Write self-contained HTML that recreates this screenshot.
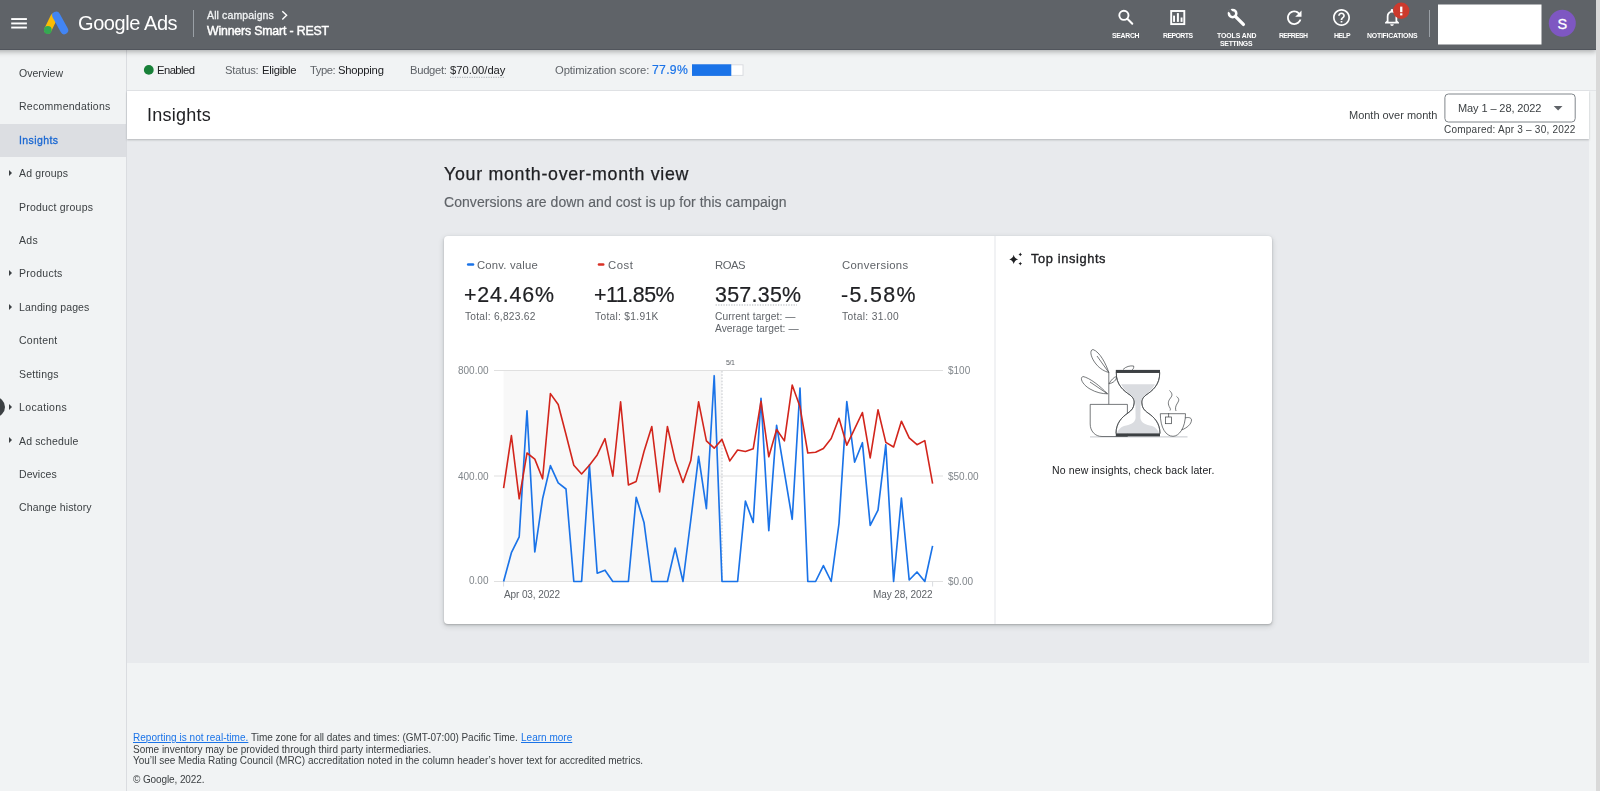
<!DOCTYPE html>
<html><head><meta charset="utf-8">
<style>
*{box-sizing:border-box;margin:0;padding:0}
html,body{width:1600px;height:791px;overflow:hidden;background:#f1f3f4;font-family:"Liberation Sans",sans-serif;color:#3c4043}
.abs{position:absolute}
.tx{position:absolute;white-space:nowrap;z-index:10;will-change:transform}
#hdr{position:absolute;left:-10px;top:0;width:1606px;height:50px;background:#5f6368;border-bottom:1px solid #51555c;box-shadow:0 2px 5px rgba(0,0,0,.28);z-index:5}
#side{position:absolute;left:0;top:49px;width:127px;height:742px;background:#f1f3f4;border-right:1px solid #dadce0}
.caret{position:absolute;left:9.2px;width:0;height:0;border-top:3.1px solid transparent;border-bottom:3.1px solid transparent;border-left:3.5px solid #3c4043}
#status{position:absolute;left:127px;top:49px;width:1469px;height:42px;background:#f1f3f4;border-bottom:1px solid #e3e5e8}
#titlebar{position:absolute;left:127px;top:91px;width:1462px;height:47.5px;background:#fff;box-shadow:0 1px 2px rgba(60,64,67,.3);z-index:2}
#main{position:absolute;left:127px;top:138px;width:1462px;height:525px;background:#e8eaed}
#sbar{position:absolute;left:1596px;top:0;width:4px;height:791px;background:#d9d9d9;z-index:20}
#card{position:absolute;left:444px;top:236px;width:828px;height:388px;background:#fff;border-radius:4px;box-shadow:0 1px 2px rgba(60,64,67,.3),0 2px 5px 1px rgba(60,64,67,.15)}
</style></head>
<body>
<div id="hdr"></div>
<div id="side"></div>
<div id="status"></div>
<div id="titlebar"></div>
<div id="main"></div>
<div id="card"></div>
<div id="sbar"></div>
<!-- selected nav -->
<div class="abs" style="left:0;top:123.8px;width:126px;height:33px;background:#dcdee2;z-index:1"></div>
<div class="caret" style="top:170px;z-index:2"></div>
<div class="caret" style="top:270.3px;z-index:2"></div>
<div class="caret" style="top:303.7px;z-index:2"></div>
<div class="caret" style="top:404px;z-index:2"></div>
<div class="caret" style="top:437.4px;z-index:2"></div>
<div class="abs" style="left:-15px;top:397px;width:20px;height:20px;border-radius:50%;background:#3c4043;z-index:3"></div>

<svg class="abs" style="left:0;top:0;z-index:8" width="1600" height="791" viewBox="0 0 1600 791">
  <!-- hamburger -->
  <rect x="11.2" y="18.1" width="15.7" height="1.9" fill="#fff"/>
  <rect x="11.2" y="22.5" width="15.7" height="1.9" fill="#fff"/>
  <rect x="11.2" y="26.6" width="15.7" height="1.9" fill="#fff"/>
  <!-- ads logo -->
  <line x1="54" y1="17.2" x2="47.8" y2="29.8" stroke="#fbbc04" stroke-width="7.4" stroke-linecap="round"/>
  <line x1="56.2" y1="15.6" x2="64.2" y2="30.2" stroke="#4285f4" stroke-width="8" stroke-linecap="round"/>
  <circle cx="47.8" cy="30" r="3.9" fill="#34a853"/>
  <!-- dividers -->
  <rect x="193" y="10" width="1" height="27" fill="#9aa0a6"/>
  <rect x="1429" y="10" width="1" height="27" fill="#9aa0a6"/>
  <!-- chevron -->
  <path d="M282.3 11.2 L286.6 15.3 L282.3 19.4" stroke="#fff" stroke-width="1.4" fill="none"/>
  <!-- search -->
  <circle cx="1123.9" cy="15.3" r="4.6" stroke="#fff" stroke-width="1.9" fill="none"/>
  <line x1="1127.3" y1="18.7" x2="1132.3" y2="23.8" stroke="#fff" stroke-width="2" stroke-linecap="round"/>
  <!-- reports -->
  <rect x="1171.2" y="11" width="13.1" height="13.1" stroke="#fff" stroke-width="1.9" fill="none"/>
  <rect x="1173.1" y="15.6" width="1.9" height="6.3" fill="#fff"/>
  <rect x="1176.9" y="13.1" width="2" height="8.8" fill="#fff"/>
  <rect x="1180.6" y="17.5" width="1.9" height="4.4" fill="#fff"/>
  <!-- tools -->
  <circle cx="1232.6" cy="13.6" r="3.7" stroke="#fff" stroke-width="2.5" fill="none"/>
  <line x1="1235.6" y1="16.6" x2="1243.4" y2="24.4" stroke="#fff" stroke-width="3.3" stroke-linecap="round"/>
  <path d="M1227.5 11.2 L1230.2 8.5 L1233.6 13.2 L1232.4 14.4 Z" fill="#5f6368"/>
  <!-- refresh -->
  <g transform="translate(1283.4,6.9) scale(0.906)">
    <path d="M17.65 6.35C16.2 4.9 14.21 4 12 4c-4.42 0-7.99 3.58-7.99 8s3.57 8 7.99 8c3.73 0 6.84-2.55 7.730-6h-2.08c-.82 2.33-3.04 4-5.65 4-3.310 0-6-2.69-6-6s2.69-6 6-6c1.66 0 3.14.69 4.22 1.78L13 11h7V4l-2.35 2.35z" fill="#fff"/>
  </g>
  <!-- help -->
  <g transform="translate(1331.3,7.3) scale(0.85)">
    <path d="M11 18h2v-2h-2v2zm1-16C6.48 2 2 6.48 2 12s4.48 10 10 10 10-4.480 10-10S17.52 2 12 2zm0 18c-4.41 0-8-3.59-8-8s3.59-8 8-8 8 3.59 8 8-3.59 8-8 8zm0-14c-2.21 0-4 1.79-4 4h2c0-1.1.9-2 2-2s2 .9 2 2c0 2-3 1.75-3 5h2c0-2.25 3-2.5 3-5 0-2.21-1.79-4-4-4z" fill="#fff"/>
  </g>
  <!-- bell -->
  <g transform="translate(1381.5,6.8) scale(0.875)">
    <path d="M12 22c1.1 0 2-.9 2-2h-4c0 1.1.89 2 2 2zm6-6v-5c0-3.07-1.64-5.64-4.5-6.32V4c0-.83-.67-1.5-1.5-1.5s-1.5.67-1.5 1.5v.68C7.63 5.360 6 7.92 6 11v5l-2 2v1h16v-1l-2-2zm-2 1H8v-6c0-2.48 1.51-4.5 4-4.5s4 2.02 4 4.5v6z" fill="#fff"/>
  </g>
  <circle cx="1401.2" cy="10.8" r="8.2" fill="#cc3a2d"/>
  <rect x="1400.1" y="6.6" width="2.3" height="5.6" fill="#fff"/>
  <rect x="1400.1" y="13.3" width="2.3" height="2.1" fill="#fff"/>
  <!-- white box + avatar -->
  <rect x="1438" y="4.5" width="103.5" height="40" fill="#fff"/>
  <circle cx="1562.3" cy="23.3" r="13.5" fill="#7e57c2"/>
  <text x="1562.4" y="29" font-size="14.5" fill="#fff" stroke="#fff" stroke-width="0.3" text-anchor="middle" font-family="Liberation Sans">S</text>

  <!-- status: green dot -->
  <circle cx="148.8" cy="69.9" r="4.9" fill="#188038"/>
  <!-- budget dotted underline -->
  <line x1="450" y1="77.3" x2="505" y2="77.3" stroke="#9aa0a6" stroke-width="0.8" stroke-dasharray="1.2 1.2"/>
  <!-- progress bar -->
  <rect x="692.5" y="64.8" width="50.5" height="10.6" fill="#fff" stroke="#dadce0" stroke-width="1"/>
  <rect x="692" y="64.3" width="39.3" height="11.6" fill="#1a73e8"/>

  <!-- date picker -->
  <rect x="1444.9" y="94" width="130.3" height="28" rx="3.5" fill="#fff" stroke="#80868b" stroke-width="1"/>
  <path d="M1553.7 106 L1562.5 106 L1558.1 110.4 Z" fill="#5f6368"/>

  <!-- card divider -->
  <rect x="994.4" y="236" width="1.2" height="388" fill="#e8eaed"/>
  <!-- legend dashes -->
  <line x1="468.2" y1="264.5" x2="473" y2="264.5" stroke="#1a73e8" stroke-width="2.6" stroke-linecap="round"/>
  <line x1="599" y1="264.5" x2="603.2" y2="264.5" stroke="#d93025" stroke-width="2.6" stroke-linecap="round"/>
  <!-- roas dotted underline -->
  <line x1="715.6" y1="305" x2="797" y2="305" stroke="#9aa0a6" stroke-width="0.8" stroke-dasharray="1.3 1.3"/>

  <!-- chart -->
  <rect x="503.6" y="371" width="218.4" height="210.4" fill="#f8f8f8"/>
  <rect x="494" y="370" width="449" height="1" fill="#e0e0e0"/>
  <rect x="494" y="475.5" width="449" height="1" fill="#e0e0e0"/>
  <rect x="494" y="581" width="449" height="1" fill="#e0e0e0"/>
  <line x1="722" y1="371" x2="722" y2="581" stroke="#bdc1c6" stroke-width="0.9" stroke-dasharray="1.6 1.6"/>
  <rect x="503.1" y="581.5" width="1" height="5" fill="#dadce0"/>
  <rect x="932.1" y="581.5" width="1" height="5" fill="#dadce0"/>
  <polyline points="503.6,581.5 511.4,552.7 519.2,536.8 527.0,410.9 534.8,552.0 542.6,498.8 550.4,465.6 558.2,482.9 566.0,489.0 573.8,581.5 581.6,581.5 589.4,464.9 597.2,573.2 605.0,570.2 612.8,581.5 620.6,581.5 628.4,581.5 636.2,497.3 644.0,522.4 651.8,581.5 659.6,581.5 667.4,581.5 675.2,548.1 683.0,581.5 690.8,520.0 698.6,456.4 706.4,508.7 714.2,375.7 722.0,581.5 729.8,581.5 737.6,581.5 745.4,501.1 753.2,522.4 761.0,398.4 768.8,530.7 776.6,425.4 784.4,472.4 792.2,519.3 800.0,388.1 807.8,581.5 815.6,581.5 823.4,565.6 831.2,581.5 839.0,523.5 846.8,401.5 854.6,462.2 862.4,442.7 870.2,525.4 878.0,510.2 885.8,444.7 893.6,581.5 901.4,498.1 909.2,580.0 917.0,572.0 924.8,581.5 932.6,545.9" fill="none" stroke="#1a73e8" stroke-width="1.65" stroke-linejoin="round"/>
  <polyline points="503.6,488.2 511.4,435.6 519.2,498.8 527.0,453.0 534.8,459.1 542.6,478.8 550.4,393.6 558.2,404.5 566.0,434.5 573.8,465.2 581.6,474.0 589.4,465.2 597.2,454.9 605.0,438.6 612.8,476.2 620.6,401.8 628.4,484.9 636.2,481.4 644.0,451.5 651.8,426.5 659.6,492.0 667.4,426.5 675.2,460.6 683.0,482.5 690.8,460.6 698.6,401.8 706.4,440.9 714.2,448.2 722.0,439.4 729.8,460.9 737.6,450.0 745.4,451.5 753.2,448.8 761.0,401.2 768.8,456.8 776.6,429.5 784.4,440.9 792.2,385.1 800.0,406.8 807.8,453.0 815.6,452.3 823.4,448.5 831.2,438.5 839.0,418.3 846.8,445.2 854.6,428.8 862.4,412.5 870.2,457.9 878.0,409.8 885.8,442.4 893.6,447.0 901.4,421.2 909.2,437.9 917.0,444.7 924.8,440.6 932.6,483.7" fill="none" stroke="#d2251c" stroke-width="1.6" stroke-linejoin="round"/>

  <!-- sparkle -->
  <path d="M1013.7 254.8 Q1014.5 258.6 1018.2 259.4 Q1014.5 260.2 1013.7 264 Q1012.9 260.2 1009.2 259.4 Q1012.9 258.6 1013.7 254.8 Z" fill="#202124"/>
  <path d="M1020.3 252.5 Q1020.6 254.1 1022.1 254.4 Q1020.6 254.7 1020.3 256.3 Q1020 254.7 1018.5 254.4 Q1020 254.1 1020.3 252.5 Z" fill="#202124"/>
  <path d="M1020.3 261.7 Q1020.6 263.3 1022.1 263.6 Q1020.6 263.9 1020.3 265.5 Q1020 263.9 1018.5 263.6 Q1020 263.3 1020.3 261.7 Z" fill="#202124"/>

  <!-- illustration -->
  <g fill="none" stroke="#3c4043" stroke-width="0.7">
    <line x1="1090" y1="436.9" x2="1187.5" y2="436.9" stroke="#bdc1c6" stroke-width="0.9"/>
    <!-- plant stem & leaves -->
    <line x1="1108.8" y1="404.4" x2="1108.8" y2="372.5"/>
    <path d="M1108.8 372.5 C1106 364 1100 352 1093 349.5 C1089 350 1091 358 1096 364 C1100 369 1105 371.5 1108.8 372.5 Z" fill="#fff"/>
    <path d="M1108.8 372.5 L1097 356"/>
    <path d="M1107.5 393.8 C1100 386 1090 378 1083 376.5 C1079 378 1083 385 1090 389 C1096 392.5 1102 393.8 1107.5 393.8 Z" fill="#fff"/>
    <path d="M1107.5 393.8 L1090 382"/>
    <path d="M1109 383.8 C1111 380 1114 377 1116.5 376.5 C1117 380 1113 383 1109 383.8 Z" fill="#fff"/>
    <path d="M1123 369.5 C1126 366.5 1130 365.5 1133.7 366 C1134 368 1133 369.5 1132 369.8" fill="#fff"/>
    <!-- pot -->
    <path d="M1090.2 404.4 L1127.4 404.4 L1127.4 436.5 L1102 436.5 C1095 436.5 1090.2 431 1090.2 424 Z" fill="#fff"/>
    <!-- hourglass glass -->
    <path id="glass" d="M1116.3 372.5 C1116 385 1124 391 1130 395 C1134 398 1134.5 401 1134 404 C1133.5 408 1132 410 1128 413 C1122 417 1116 423 1116 433.5 L1160 433.5 C1160 423 1154 417 1148 413 C1144 410 1142.5 408 1142 404 C1141.5 401 1142 398 1146 395 C1152 391 1160 385 1159.7 372.5 Z" fill="#fff"/>
    <path d="M1121.1 384.3 L1155 384.3 C1152 390 1148 393 1144 396 C1141.5 398 1140.8 401 1140.6 404 L1140.4 418 C1141 423 1146 425 1152 426 C1155 427 1158 430 1159.5 433.5 L1116.5 433.5 C1118 430 1121 427 1124 426 C1130 425 1135 423 1135.6 418 L1135.4 404 C1135.2 401 1134.5 398 1132 396 C1128 393 1124 390 1121.1 384.3 Z" fill="#dadce0" stroke="none"/>
    <path d="M1116.3 372.5 C1116 385 1124 391 1130 395 C1134 398 1134.5 401 1134 404 C1133.5 408 1132 410 1128 413 C1122 417 1116 423 1116 433.5 M1160 433.5 C1160 423 1154 417 1148 413 C1144 410 1142.5 408 1142 404 C1141.5 401 1142 398 1146 395 C1152 391 1160 385 1159.7 372.5"/>
    <!-- cup -->
    <path d="M1160.3 413.7 L1185.5 413.7 C1185.5 428 1179 436.3 1173 436.3 C1166 436.3 1160.3 428 1160.3 413.7 Z" fill="#fff"/>
    <path d="M1185 418 C1188 417 1191.5 417.5 1191.5 420 C1191.5 424 1187 428 1181.5 430"/>
    <line x1="1168.6" y1="413.2" x2="1168.6" y2="417"/>
    <rect x="1165.6" y="417" width="6" height="6.7" fill="#fff"/>
    <path d="M1169.5 390.5 C1172 393 1173 395 1170.5 398 C1168 401 1167.5 404 1170 408 C1170.5 409 1170.5 410 1170 410.5"/>
    <path d="M1176.5 396.4 C1179 398.5 1179.5 400 1177.5 403 C1175.5 406 1175 408.5 1176 411"/>
  </g>
  <rect x="1115.8" y="369.9" width="44.2" height="3" fill="#3c4043"/>
  <rect x="1115.8" y="433.6" width="44.2" height="2.8" fill="#3c4043"/>
</svg>
<div class="tx" style="left:78.00px;top:13.00px;font-size:20px;line-height:20px;color:#fff;letter-spacing:-0.425px;">Google Ads</div>
<div class="tx" style="left:207.47px;top:10.00px;font-size:10.5px;line-height:10.5px;color:#f1f3f4;letter-spacing:0.122px;-webkit-text-stroke:0.3px #f1f3f4">All campaigns</div>
<div class="tx" style="left:207.38px;top:25.00px;font-size:12.3px;line-height:12.3px;color:#fff;letter-spacing:-0.161px;-webkit-text-stroke:0.45px #fff">Winners Smart - REST</div>
<div class="tx" style="left:1112.15px;top:33.00px;font-size:6.9px;line-height:6.9px;color:#fff;font-weight:700;letter-spacing:-0.311px;">SEARCH</div>
<div class="tx" style="left:1162.65px;top:33.00px;font-size:6.9px;line-height:6.9px;color:#fff;font-weight:700;letter-spacing:-0.543px;">REPORTS</div>
<div class="tx" style="left:1216.65px;top:33.00px;font-size:6.9px;line-height:6.9px;color:#fff;font-weight:700;letter-spacing:-0.081px;">TOOLS AND</div>
<div class="tx" style="left:1219.65px;top:41.00px;font-size:6.9px;line-height:6.9px;color:#fff;font-weight:700;letter-spacing:-0.274px;">SETTINGS</div>
<div class="tx" style="left:1279.15px;top:33.00px;font-size:6.9px;line-height:6.9px;color:#fff;font-weight:700;letter-spacing:-0.648px;">REFRESH</div>
<div class="tx" style="left:1333.65px;top:33.00px;font-size:6.9px;line-height:6.9px;color:#fff;font-weight:700;letter-spacing:-0.613px;">HELP</div>
<div class="tx" style="left:1366.65px;top:33.00px;font-size:6.9px;line-height:6.9px;color:#fff;font-weight:700;letter-spacing:-0.212px;">NOTIFICATIONS</div>
<div class="tx" style="left:18.98px;top:68.00px;font-size:10.5px;line-height:10.5px;color:#3c4043;letter-spacing:0.039px;">Overview</div>
<div class="tx" style="left:18.98px;top:101.00px;font-size:10.5px;line-height:10.5px;color:#3c4043;letter-spacing:0.271px;">Recommendations</div>
<div class="tx" style="left:18.98px;top:135.00px;font-size:10.5px;line-height:10.5px;color:#1967d2;letter-spacing:0.408px;-webkit-text-stroke:0.3px #1967d2">Insights</div>
<div class="tx" style="left:18.98px;top:168.00px;font-size:10.5px;line-height:10.5px;color:#3c4043;letter-spacing:0.146px;">Ad groups</div>
<div class="tx" style="left:18.98px;top:202.00px;font-size:10.5px;line-height:10.5px;color:#3c4043;letter-spacing:0.209px;">Product groups</div>
<div class="tx" style="left:18.98px;top:235.00px;font-size:10.5px;line-height:10.5px;color:#3c4043;letter-spacing:0.273px;">Ads</div>
<div class="tx" style="left:18.98px;top:268.00px;font-size:10.5px;line-height:10.5px;color:#3c4043;letter-spacing:0.272px;">Products</div>
<div class="tx" style="left:18.98px;top:302.00px;font-size:10.5px;line-height:10.5px;color:#3c4043;letter-spacing:0.119px;">Landing pages</div>
<div class="tx" style="left:18.98px;top:335.00px;font-size:10.5px;line-height:10.5px;color:#3c4043;letter-spacing:0.243px;">Content</div>
<div class="tx" style="left:18.98px;top:369.00px;font-size:10.5px;line-height:10.5px;color:#3c4043;letter-spacing:0.227px;">Settings</div>
<div class="tx" style="left:18.98px;top:402.00px;font-size:10.5px;line-height:10.5px;color:#3c4043;letter-spacing:0.348px;">Locations</div>
<div class="tx" style="left:18.98px;top:436.00px;font-size:10.5px;line-height:10.5px;color:#3c4043;letter-spacing:0.144px;">Ad schedule</div>
<div class="tx" style="left:18.98px;top:469.00px;font-size:10.5px;line-height:10.5px;color:#3c4043;letter-spacing:0.047px;">Devices</div>
<div class="tx" style="left:18.98px;top:502.00px;font-size:10.5px;line-height:10.5px;color:#3c4043;letter-spacing:0.147px;">Change history</div>
<div class="tx" style="left:157.34px;top:65.00px;font-size:11.25px;line-height:11.25px;color:#202124;letter-spacing:-0.566px;">Enabled</div>
<div class="tx" style="left:224.84px;top:65.00px;font-size:11.25px;line-height:11.25px;color:#5f6368;letter-spacing:-0.214px;">Status:</div>
<div class="tx" style="left:262.19px;top:65.00px;font-size:11.25px;line-height:11.25px;color:#202124;letter-spacing:-0.269px;">Eligible</div>
<div class="tx" style="left:309.74px;top:65.00px;font-size:11.25px;line-height:11.25px;color:#5f6368;letter-spacing:-0.479px;">Type:</div>
<div class="tx" style="left:338.19px;top:65.00px;font-size:11.25px;line-height:11.25px;color:#202124;letter-spacing:-0.235px;">Shopping</div>
<div class="tx" style="left:410.44px;top:65.00px;font-size:11.25px;line-height:11.25px;color:#5f6368;letter-spacing:-0.299px;">Budget:</div>
<div class="tx" style="left:449.84px;top:65.00px;font-size:11.25px;line-height:11.25px;color:#202124;letter-spacing:-0.021px;">$70.00/day</div>
<div class="tx" style="left:554.69px;top:65.00px;font-size:11.25px;line-height:11.25px;color:#5f6368;letter-spacing:-0.105px;">Optimization score:</div>
<div class="tx" style="left:651.89px;top:64.00px;font-size:12.2px;line-height:12.2px;color:#1a73e8;letter-spacing:0.291px;-webkit-text-stroke:0.2px #1a73e8">77.9%</div>
<div class="tx" style="left:147.20px;top:106.00px;font-size:18px;line-height:18px;color:#202124;letter-spacing:0.228px;">Insights</div>
<div class="tx" style="left:1349.15px;top:110.00px;font-size:11px;line-height:11px;color:#3c4043;letter-spacing:-0.018px;">Month over month</div>
<div class="tx" style="left:1458.25px;top:103.00px;font-size:11px;line-height:11px;color:#3c4043;letter-spacing:-0.102px;">May 1 – 28, 2022</div>
<div class="tx" style="left:1444.20px;top:125.00px;font-size:10px;line-height:10px;color:#3c4043;letter-spacing:0.230px;">Compared: Apr 3 – 30, 2022</div>
<div class="tx" style="left:443.61px;top:166.00px;font-size:17.8px;line-height:17.8px;color:#202124;letter-spacing:0.711px;-webkit-text-stroke:0.25px #202124">Your month-over-month view</div>
<div class="tx" style="left:443.80px;top:195.00px;font-size:14px;line-height:14px;color:#5f6368;letter-spacing:0.049px;-webkit-text-stroke:0.15px #5f6368">Conversions are down and cost is up for this campaign</div>
<div class="tx" style="left:477.13px;top:260.00px;font-size:11.3px;line-height:11.3px;color:#5f6368;letter-spacing:0.188px;">Conv. value</div>
<div class="tx" style="left:464.13px;top:285.00px;font-size:21.4px;line-height:21.4px;color:#202124;letter-spacing:0.811px;-webkit-text-stroke:0.2px #202124">+24.46%</div>
<div class="tx" style="left:464.69px;top:312.00px;font-size:10.2px;line-height:10.2px;color:#5f6368;letter-spacing:0.248px;">Total: 6,823.62</div>
<div class="tx" style="left:607.53px;top:260.00px;font-size:11.3px;line-height:11.3px;color:#5f6368;letter-spacing:0.523px;">Cost</div>
<div class="tx" style="left:594.23px;top:285.00px;font-size:21.4px;line-height:21.4px;color:#202124;letter-spacing:-0.474px;-webkit-text-stroke:0.2px #202124">+11.85%</div>
<div class="tx" style="left:594.79px;top:312.00px;font-size:10.2px;line-height:10.2px;color:#5f6368;letter-spacing:0.312px;">Total: $1.91K</div>
<div class="tx" style="left:715.03px;top:260.00px;font-size:11.3px;line-height:11.3px;color:#5f6368;letter-spacing:-0.471px;">ROAS</div>
<div class="tx" style="left:714.53px;top:285.00px;font-size:21.4px;line-height:21.4px;color:#202124;letter-spacing:0.276px;-webkit-text-stroke:0.2px #202124">357.35%</div>
<div class="tx" style="left:715.09px;top:312.00px;font-size:10.2px;line-height:10.2px;color:#5f6368;letter-spacing:0.113px;">Current target: —</div>
<div class="tx" style="left:715.09px;top:324.00px;font-size:10.2px;line-height:10.2px;color:#5f6368;letter-spacing:0.070px;">Average target: —</div>
<div class="tx" style="left:841.93px;top:260.00px;font-size:11.3px;line-height:11.3px;color:#5f6368;letter-spacing:0.331px;">Conversions</div>
<div class="tx" style="left:841.43px;top:285.00px;font-size:21.4px;line-height:21.4px;color:#202124;letter-spacing:1.326px;-webkit-text-stroke:0.2px #202124">-5.58%</div>
<div class="tx" style="left:841.99px;top:312.00px;font-size:10.2px;line-height:10.2px;color:#5f6368;letter-spacing:0.357px;">Total: 31.00</div>
<div class="tx" style="left:458.11px;top:366.00px;font-size:10px;line-height:10px;color:#80868b;">800.00</div>
<div class="tx" style="left:458.11px;top:472.00px;font-size:10px;line-height:10px;color:#80868b;">400.00</div>
<div class="tx" style="left:469.23px;top:576.00px;font-size:10px;line-height:10px;color:#80868b;">0.00</div>
<div class="tx" style="left:947.60px;top:366.00px;font-size:10px;line-height:10px;color:#80868b;">$100</div>
<div class="tx" style="left:947.60px;top:472.00px;font-size:10px;line-height:10px;color:#80868b;">$50.00</div>
<div class="tx" style="left:947.60px;top:577.00px;font-size:10px;line-height:10px;color:#80868b;">$0.00</div>
<div class="tx" style="left:726.25px;top:359.00px;font-size:7px;line-height:7px;color:#5f6368;letter-spacing:-0.437px;">5/1</div>
<div class="tx" style="left:503.50px;top:590.00px;font-size:10px;line-height:10px;color:#5f6368;letter-spacing:-0.106px;">Apr 03, 2022</div>
<div class="tx" style="left:873.20px;top:590.00px;font-size:10px;line-height:10px;color:#5f6368;letter-spacing:-0.092px;">May 28, 2022</div>
<div class="tx" style="left:1030.56px;top:253.00px;font-size:12.8px;line-height:12.8px;color:#202124;letter-spacing:0.631px;-webkit-text-stroke:0.35px #202124">Top insights</div>
<div class="tx" style="left:1052.27px;top:465.00px;font-size:10.5px;line-height:10.5px;color:#202124;letter-spacing:0.126px;">No new insights, check back later.</div>
<div class="tx" style="left:133.10px;top:733.00px;font-size:10px;line-height:10px;color:#1a73e8;letter-spacing:0.031px;text-decoration:underline">Reporting is not real-time.</div>
<div class="tx" style="left:250.70px;top:733.00px;font-size:10px;line-height:10px;color:#3c4043;letter-spacing:-0.031px;">Time zone for all dates and times: (GMT-07:00) Pacific Time.</div>
<div class="tx" style="left:520.70px;top:733.00px;font-size:10px;line-height:10px;color:#1a73e8;letter-spacing:0.007px;text-decoration:underline">Learn more</div>
<div class="tx" style="left:133.10px;top:745.00px;font-size:10px;line-height:10px;color:#3c4043;letter-spacing:-0.004px;">Some inventory may be provided through third party intermediaries.</div>
<div class="tx" style="left:133.10px;top:756.00px;font-size:10px;line-height:10px;color:#3c4043;letter-spacing:-0.009px;">You’ll see Media Rating Council (MRC) accreditation noted in the column header’s hover text for accredited metrics.</div>
<div class="tx" style="left:133.10px;top:775.00px;font-size:10px;line-height:10px;color:#3c4043;letter-spacing:-0.106px;">© Google, 2022.</div>
</body></html>
